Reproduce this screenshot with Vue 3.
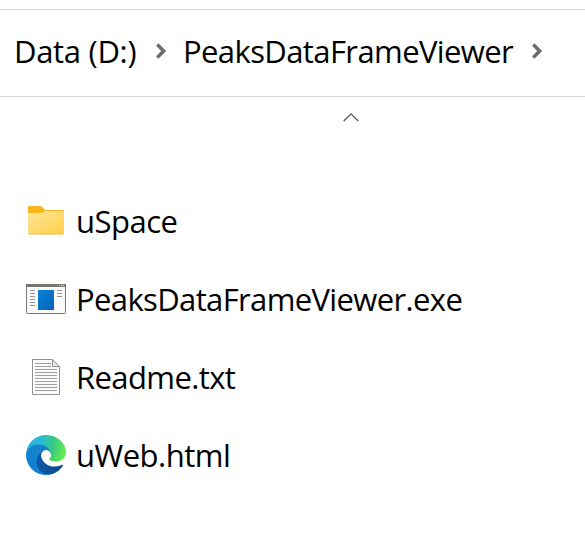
<script setup>
const files = [
  { name: 'uSpace', type: 'folder' },
  { name: 'PeaksDataFrameViewer.exe', type: 'exe' },
  { name: 'Readme.txt', type: 'text' },
  { name: 'uWeb.html', type: 'edge' },
]
const textLines = [6.5, 9.5, 12.5, 15.5, 18.5, 21.5, 24.5, 27.5, 30.5, 33.5]
</script>

<template>
  <main class="explorer">
    <nav class="address">
      <span class="crumb drive">Data (D:)</span>
      <svg class="chevron first" viewBox="0 0 12 18"><path d="M2.3 2.500 8.700 9l-6.400 6.500" /></svg>
      <span class="crumb folder-name">PeaksDataFrameViewer</span>
      <svg class="chevron" viewBox="0 0 12 18"><path d="M2.3 2.500 8.700 9l-6.400 6.500" /></svg>
    </nav>
    <div class="sort">
      <svg viewBox="0 0 16 9"><path d="M.7 8 8 .9 15.3 8" /></svg>
    </div>
    <ul class="files">
      <li v-for="file in files" :key="file.name">
        <svg v-if="file.type === 'folder'" class="icon" viewBox="0 0 40 40">
          <defs>
            <linearGradient id="folder" x1="0" y1="0" x2="1" y2="1">
              <stop offset="0" stop-color="#ffe69a" /><stop offset="1" stop-color="#ffcf48" />
            </linearGradient>
          </defs>
          <path fill="#f8b51c" d="M2 6.500Q2 5 3.500 5h10.700q1 0 1.800.7L19.200 9H36.500q1.500 0 1.500 1.500V20H2z" />
          <path fill="url(#folder)" d="M2 12h13q1 0 1.800-.7l1.700-1.300H36.500q1.500 0 1.500 1.300v20.500Q38 33.300 36.500 33.300h-33Q2 33.300 2 31.800z" />
          <path fill="none" stroke="#e9b02b" stroke-width=".8" d="M2.500 32.700q.4.300 1 .3h33q.6 0 1-.3" />
        </svg>
        <svg v-else-if="file.type === 'exe'" class="icon" viewBox="0 0 40 40">
          <defs>
            <linearGradient id="window" x1="0" y1="0" x2="1" y2="1">
              <stop offset="0" stop-color="#0b83da" /><stop offset="1" stop-color="#0861b8" />
            </linearGradient>
          </defs>
          <rect x=".5" y="5.500" width="39" height="29" rx=".8" fill="#fafafa" stroke="#797774" />
          <path fill="#797774" d="M0 5h40v3H0z" />
          <path stroke="#e8e8e8" d="M33 6.500h1m1 0h1m1 0h1" />
          <rect x="12" y="11" width="16" height="20" fill="url(#window)" />
          <path stroke="#959595" d="M4 11.500h5M4 14.500h5M4 17.500h5M4 20.500h5M4 23.500h5M4 26.500h5M31 11.500h5M31 14.500h5M31 17.500h5" />
        </svg>
        <svg v-else-if="file.type === 'text'" class="icon" viewBox="0 0 40 40">
          <path fill="#fafafa" stroke="#929292" d="M6.500 2.500h20l7 7v28h-27z" />
          <path fill="#e3e7ea" stroke="#929292" d="M26.500 2.500v7h7z" />
          <path
            v-for="(y, i) in textLines"
            :key="y"
            stroke="#a0a0a0"
            :d="`M9 ${y}H${i < 2 ? 25 : 31}`"
          />
        </svg>
        <svg v-else class="icon" viewBox="0 0 256 256">
          <defs>
            <linearGradient id="edge-deep" x1="60" y1="177" x2="240" y2="177" gradientUnits="userSpaceOnUse">
              <stop offset="0" stop-color="#0c59a4" /><stop offset="1" stop-color="#114a8b" />
            </linearGradient>
            <linearGradient id="edge-blue" x1="150" y1="95" x2="45" y2="220" gradientUnits="userSpaceOnUse">
              <stop offset="0" stop-color="#1b7fc8" /><stop offset=".5" stop-color="#1384cf" /><stop offset="1" stop-color="#0f7fd4" />
            </linearGradient>
            <radialGradient id="edge-green" cx="26" cy="47" r="230" gradientUnits="userSpaceOnUse">
              <stop offset="0" stop-color="#27b0e6" /><stop offset=".35" stop-color="#2bbcd3" /><stop offset=".65" stop-color="#36c985" /><stop offset="1" stop-color="#66eb4e" />
            </radialGradient>
          </defs>
          <path fill="url(#edge-deep)" d="M231 190.500a93.700 93.700 0 0 1-10.500 4.700 101.900 101.900 0 0 1-35.900 6.500c-47.300 0-88.500-32.500-88.500-74.300a31.500 31.500 0 0 1 16.400-27.300c-42.800 1.800-53.800 46.400-53.800 72.500 0 73.900 68.100 81.400 82.800 81.400 7.900 0 19.800-2.300 27-4.600l1.300-.4a128.300 128.300 0 0 0 66.600-52.800 4 4 0 0 0-5.400-5.700z" />
          <path fill="url(#edge-blue)" d="M105.700 241.400a79.200 79.200 0 0 1-22.700-21.300 80.700 80.700 0 0 1 29.500-120c3.100-1.500 8.500-4.100 15.600-4a32.400 32.400 0 0 1 25.700 13 31.900 31.900 0 0 1 6.300 18.700c0-.2 24.500-79.600-80-79.600-43.900 0-80 41.700-80 78.200a130.200 130.200 0 0 0 12.100 56 128 128 0 0 0 156.400 67 75.500 75.500 0 0 1-62.800-8z" />
          <path fill="url(#edge-green)" d="M152.300 148.900c-.8 1-3.300 2.500-3.300 5.700 0 2.600 1.700 5.100 4.700 7.200 14.400 10 41.500 8.700 41.600 8.700a59.600 59.600 0 0 0 30.300-8.300 61.400 61.400 0 0 0 30.400-52.900c.3-22.400-8-37.300-11.300-43.900C223.500 23.900 177.700 0 128 0A128 128 0 0 0 0 126.200c.5-36.500 36.800-66 80-66 3.500 0 23.500.3 42 10 16.300 8.600 24.900 18.900 30.800 29.200 6.200 10.700 7.300 24.100 7.300 29.500s-2.700 13.300-7.800 20z" />
        </svg>
        <span class="name" :class="file.type">{{ file.name }}</span>
      </li>
    </ul>
  </main>
</template>

<style>
body { margin: 0; background: #fff; }
</style>

<style scoped>
.explorer {
  box-sizing: border-box;
  height: 551px;
  padding-top: 9px;
  overflow: hidden;
  background: #fff;
  color: #000;
  font-family: "Open Sans", "Noto Sans", sans-serif;
  font-size: 31px;
  font-weight: 400;
  font-kerning: none;
}
.address {
  display: flex;
  align-items: center;
  box-sizing: border-box;
  height: 88px;
  padding: 0 0 4px 14px;
  border-top: 1px solid #d9d9d9;
  border-bottom: 1px solid #d9d9d9;
  white-space: pre;
}
.crumb { flex: none; line-height: 42px; }
.drive { width: 141px; letter-spacing: -.3px; }
.folder-name { width: 348px; letter-spacing: -.6px; }
.chevron { flex: none; width: 12px; height: 18px; }
.chevron.first { margin-right: 16px; }
.chevron path { fill: none; stroke: #6b6b6b; stroke-width: 3.4; }
.sort { height: 85px; padding: 16px 0 0 342.5px; box-sizing: border-box; }
.sort svg { display: block; width: 16px; height: 9px; }
.sort path { fill: none; stroke: #444; stroke-width: 1.1; }
.files { margin: 0; padding: 0; list-style: none; }
.files li { display: flex; align-items: center; height: 78px; padding-left: 26px; }
.icon { flex: none; width: 40px; height: 40px; margin-right: 10px; }
.name { white-space: pre; line-height: 42px; letter-spacing: -.5px; }
.name.exe { letter-spacing: -.63px; }
.name.text { letter-spacing: -.6px; }
</style>
